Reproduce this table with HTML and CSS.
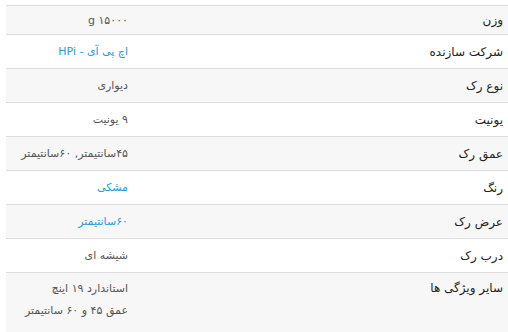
FILE: index.html
```html
<!DOCTYPE html>
<html lang="fa" dir="rtl">
<head>
<meta charset="utf-8">
<link rel="stylesheet" href="styles.css">
</head>
<body>
<div class="specs">
  <div class="row odd first"><div class="label">وزن</div><div class="value">g ۱۵۰۰۰</div></div>
  <div class="row"><div class="label">شرکت سازنده</div><div class="value"><a class="link">اچ پی آی - HPi</a></div></div>
  <div class="row odd"><div class="label">نوع رک</div><div class="value">دیواری</div></div>
  <div class="row"><div class="label">یونیت</div><div class="value">۹ یونیت</div></div>
  <div class="row odd"><div class="label">عمق رک</div><div class="value">۴۵سانتیمتر, ۶۰سانتیمتر</div></div>
  <div class="row"><div class="label">رنگ</div><div class="value"><a class="link">مشکی</a></div></div>
  <div class="row odd"><div class="label">عرض رک</div><div class="value"><a class="link">۶۰سانتیمتر</a></div></div>
  <div class="row"><div class="label">درب رک</div><div class="value">شیشه ای</div></div>
  <div class="row odd last"><div class="label">سایر ویژگی ها</div><div class="value multi"><p>استاندارد ۱۹ اینچ</p><p>عمق ۴۵ و ۶۰ سانتیمتر</p></div></div>
</div>
</body>
</html>
```
FILE: styles.css
```css
html, body {
  margin: 0;
  padding: 0;
  background: #fff;
}
body {
  padding-top: 5px;
  padding-left: 6px;
  font-family: "DejaVu Sans", sans-serif;
}
.specs {
  border-top: 1px solid #dddddd;
}
.row {
  display: flex;
  height: 33px;
  border-bottom: 1px solid #dddddd;
  align-items: center;
}
.row.first { height: 28px; }
.row.last { height: auto; align-items: flex-start; padding-bottom: 12px; }
.row.odd { background: #f7f7f7; }
.label {
  flex: 0 0 372px;
  box-sizing: border-box;
  padding-right: 5px;
  font-size: 12px;
  color: #222;
}
.value {
  flex: 1;
  box-sizing: border-box;
  padding-right: 8px;
  font-size: 11px;
  color: #555;
}
.link { color: #2b9bd6; text-decoration: none; }
.last .label { padding-top: 8px; }
.multi p { margin: 0; line-height: 22px; }
.multi { padding-top: 5px; }
```
